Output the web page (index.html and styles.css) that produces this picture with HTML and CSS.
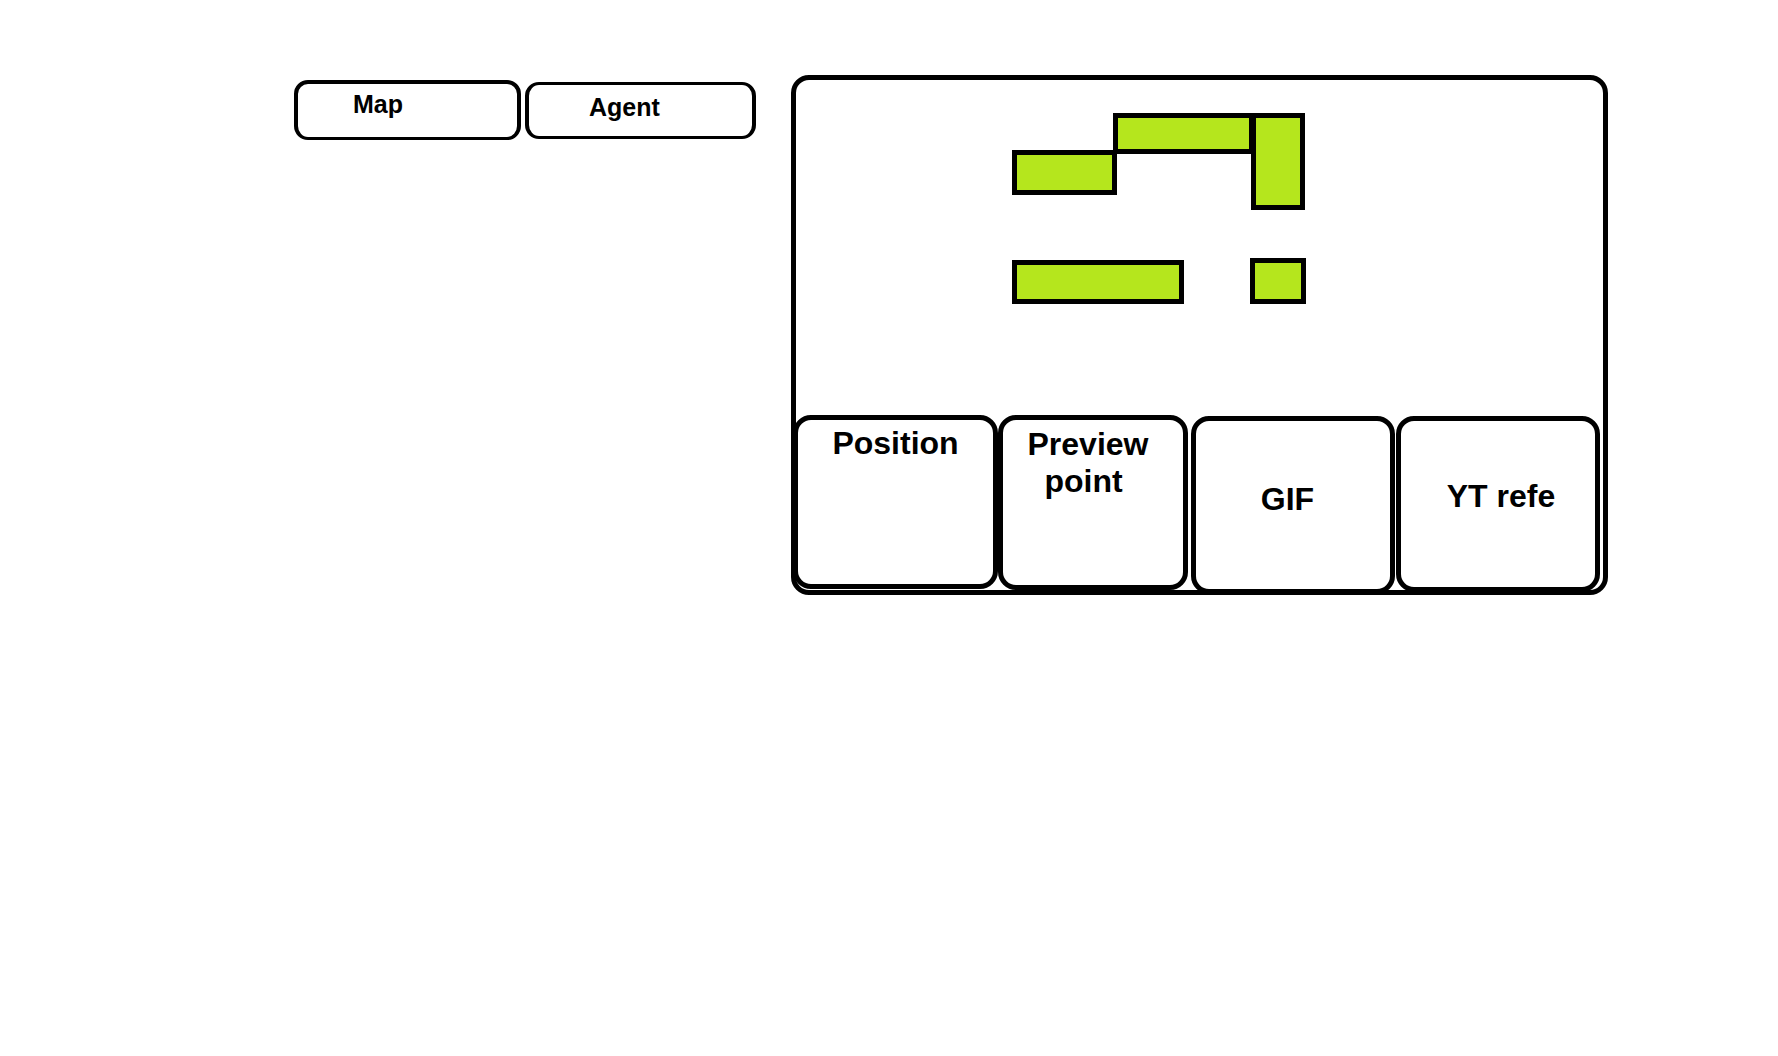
FILE: index.html
```html
<!DOCTYPE html>
<html lang="en">
<head>
<meta charset="utf-8">
<title>Map and agent</title>
<link rel="stylesheet" href="styles.css">
</head>
<body>
<main class="page">
  <nav class="filters">
    <button type="button" class="filter filter-map">Map</button>
    <button type="button" class="filter filter-agent">Agent</button>
  </nav>
  <section class="viewer">
    <svg class="plan" viewBox="0 0 807 335" aria-hidden="true">
      <g class="walls">
        <rect x="218.500" y="72.500" width="100" height="40"/>
        <rect x="319.500" y="35.500" width="136" height="36"/>
        <rect x="457.500" y="35.500" width="49" height="92"/>
        <rect x="218.500" y="182.500" width="167" height="39"/>
        <rect x="456.500" y="180.500" width="51" height="41"/>
      </g>
    </svg>
    <div class="cards">
      <button type="button" class="card card-position">Position</button>
      <button type="button" class="card card-preview">Preview<br>point&nbsp;</button>
      <button type="button" class="card card-gif">GIF</button>
      <button type="button" class="card card-video">YT refe</button>
    </div>
  </section>
</main>
</body>
</html>
```
FILE: styles.css
```css
* {
  box-sizing: border-box;
}

body {
  margin: 0;
  background: #fff;
  color: #000;
  font-family: "Liberation Sans", Arial, sans-serif;
}

.page {
  display: grid;
  grid-template-columns: 462fr 817fr;
  gap: 35px;
  align-items: start;
  padding: 75px 170px 75px 294px;
}

button {
  margin: 0;
  background: #fff;
  color: inherit;
  font-family: inherit;
  font-weight: bold;
}

.filters {
  display: grid;
  grid-template-columns: 227fr 231fr;
  gap: 4px;
  align-items: center;
  padding-top: 5px;
}

.filter {
  display: flex;
  align-items: flex-start;
  border: solid #000;
  border-width: 3px 4px;
  border-radius: 14px;
  font-size: 25px;
  line-height: 28px;
}

.filter-map {
  height: 60px;
  border-top-width: 4px;
  padding: 6px 0 0 55px;
}

.filter-agent {
  height: 57px;
  padding: 8px 0 0 60px;
}

.viewer {
  border: 5px solid #000;
  border-radius: 18px;
}

.plan {
  display: block;
  width: 100%;
}

.walls {
  fill: #b5e61d;
  stroke: #000;
  stroke-width: 5px;
}

.cards {
  display: grid;
  grid-template-columns: 205fr 193fr 205fr 204fr;
  align-items: start;
  margin: 0 3px -4px -3px;
}

.card {
  padding: 5px 0 0;
  border: 5px solid #000;
  border-radius: 18px;
  font-size: 32px;
  line-height: 37px;
  text-align: center;
  display: flex;
  justify-content: center;
  align-items: flex-start;
}

.card-position {
  height: 174px;
}

.card-preview {
  height: 175px;
  margin-right: 3px;
  padding: 6px 10px 0 0;
}

.card-gif {
  height: 178px;
  margin: 1px 1px 0 0;
  padding: 60px 11px 0 0;
}

.card-video {
  height: 176px;
  margin-top: 1px;
  padding: 57px 0 0 6px;
}
```
